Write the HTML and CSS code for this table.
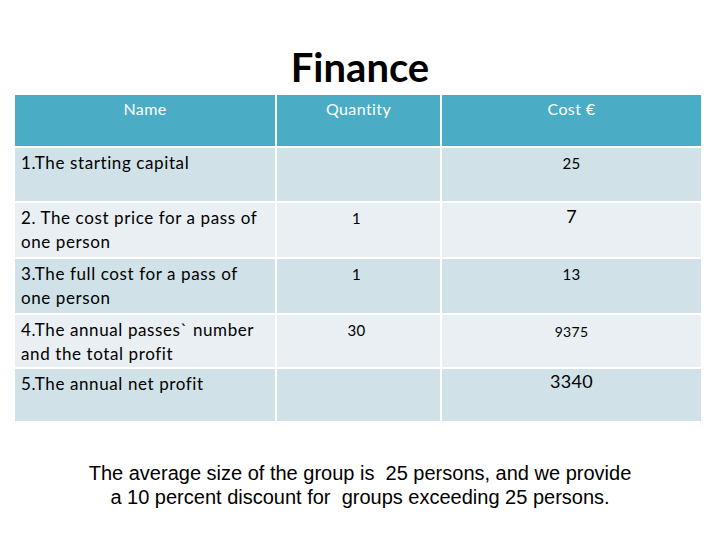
FILE: index.html
```html
<!DOCTYPE html>
<html>
<head>
<meta charset="utf-8">
<link rel="stylesheet" href="styles.css">
</head>
<body>
<div class="slide">
  <h1 class="title">Finance</h1>
  <div class="table">
    <div class="cell head">Name</div>
    <div class="cell head">Quantity</div>
    <div class="cell head">Cost €</div>

    <div class="cell name odd">1.The starting capital</div>
    <div class="cell num qty odd"></div>
    <div class="cell num odd">25</div>

    <div class="cell name even">2. The cost price for a pass of one person</div>
    <div class="cell num qty even">1</div>
    <div class="cell num even big">7</div>

    <div class="cell name odd">3.The full cost for a pass of one person</div>
    <div class="cell num qty odd">1</div>
    <div class="cell num odd">13</div>

    <div class="cell name even">4.The annual passes` number and the total profit</div>
    <div class="cell num qty even">30</div>
    <div class="cell num even small">9375</div>

    <div class="cell name odd">5.The annual net profit</div>
    <div class="cell num qty odd"></div>
    <div class="cell num odd big top">3340</div>
  </div>
  <p class="note">The average size of the group is &nbsp;25 persons, and we provide<br>a 10 percent discount for &nbsp;groups exceeding 25 persons.</p>
</div>
</body>
</html>
```
FILE: styles.css
```css
html, body {
  margin: 0;
  padding: 0;
  background: #ffffff;
}
.slide {
  width: 720px;
  height: 540px;
  overflow: hidden;
  display: flex;
  flex-direction: column;
  align-items: flex-start;
}
.title {
  align-self: center;
  margin: 40px 0 0 0;
  font-family: Lato, "Open Sans", sans-serif;
  font-weight: bold;
  font-size: 40px;
  line-height: 54px;
  height: 55px;
  color: #000;
}
.table {
  margin-left: 15px;
  display: grid;
  grid-template-columns: 260px 163px 259px;
  grid-template-rows: 51px 53px 54px 54px 52px 52px;
  column-gap: 2px;
  row-gap: 2px;
  background: #ffffff;
}
.cell {
  font-family: Lato, "Open Sans", sans-serif;
  font-size: 17px;
  line-height: 24px;
  letter-spacing: 0.6px;
  color: #000;
  box-sizing: border-box;
}
.head {
  background: #4bacc6;
  color: #ffffff;
  text-align: center;
  font-size: 16px;
  letter-spacing: 0.4px;
  padding-top: 2px;
}
.odd {
  background: #d0e2e8;
}
.even {
  background: #e9eff3;
}
.name {
  padding: 3px 4px 0 6px;
}
.num {
  text-align: center;
  font-size: 15px;
  letter-spacing: 0.3px;
  padding-top: 3px;
}
.qty {
  padding-right: 4px;
}
.big {
  font-size: 18px;
  padding-top: 1px;
}
.top {
  padding-top: 0;
}
.small {
  font-size: 14px;
  padding-top: 5px;
}
.note {
  align-self: center;
  margin: 40px 0 0 0;
  font-family: "Liberation Sans", Arial, sans-serif;
  font-size: 20px;
  line-height: 24px;
  text-align: center;
  color: #000;
}
```
